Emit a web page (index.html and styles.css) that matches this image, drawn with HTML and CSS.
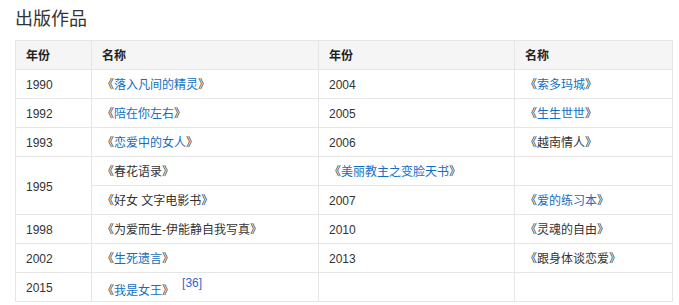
FILE: index.html
```html
<!DOCTYPE html>
<html lang="zh">
<head>
<meta charset="utf-8">
<link rel="stylesheet" href="styles.css">
</head>
<body>
<div class="wrap">
  <h2 class="title">出版作品</h2>
  <table class="works">
    <colgroup>
      <col class="c1"><col class="c2"><col class="c3"><col class="c4">
    </colgroup>
    <tr class="head"><th>年份</th><th>名称</th><th>年份</th><th>名称</th></tr>
    <tr><td>1990</td><td>《<a>落入凡间的精灵</a>》</td><td>2004</td><td>《<a>索多玛城</a>》</td></tr>
    <tr><td>1992</td><td>《<a>陪在你左右</a>》</td><td>2005</td><td>《<a>生生世世</a>》</td></tr>
    <tr><td>1993</td><td>《<a>恋爱中的女人</a>》</td><td>2006</td><td>《越南情人》</td></tr>
    <tr><td rowspan="2">1995</td><td>《春花语录》</td><td>《<a>美丽教主之变脸天书</a>》</td><td></td></tr>
    <tr><td>《好女 文字电影书》</td><td>2007</td><td>《<a>爱的练习本</a>》</td></tr>
    <tr><td>1998</td><td>《为爱而生-伊能静自我写真》</td><td>2010</td><td>《灵魂的自由》</td></tr>
    <tr><td>2002</td><td>《<a>生死遗言</a>》</td><td>2013</td><td>《跟身体谈恋爱》</td></tr>
    <tr><td>2015</td><td>《<a>我是女王</a>》<sup class="ref">[36]</sup></td><td></td><td></td></tr>
  </table>
</div>
</body>
</html>
```
FILE: styles.css
```css
html, body {
  margin: 0;
  padding: 0;
  background: #fff;
}
.wrap {
  padding: 6px 0 0 15px;
  font-family: "Liberation Sans", Arial, "Noto Sans CJK SC", sans-serif;
  color: #333;
}
.title {
  margin: 0 0 8px 0;
  font-size: 18px;
  font-weight: normal;
  line-height: 26px;
  color: #333;
}
.works {
  border-collapse: collapse;
  width: 657px;
  table-layout: fixed;
  font-size: 12px;
}
.c1 { width: 76px; }
.c2 { width: 227px; }
.c3 { width: 196px; }
.c4 { width: 158px; }
.works th, .works td {
  border: 1px solid #e6e6e6;
  height: 29px;
  box-sizing: border-box;
  padding: 2px 0 0 10px;
  text-align: left;
  vertical-align: middle;
  line-height: 16px;
  white-space: nowrap;
}
.works th {
  background: #f5f5f5;
  font-weight: bold;
  color: #222;
}
.works a {
  color: #136ec2;
  text-decoration: none;
}
.ref {
  color: #3366cc;
  font-size: 12px;
  margin-left: 8px;
  position: relative;
  top: -3px;
}
```
